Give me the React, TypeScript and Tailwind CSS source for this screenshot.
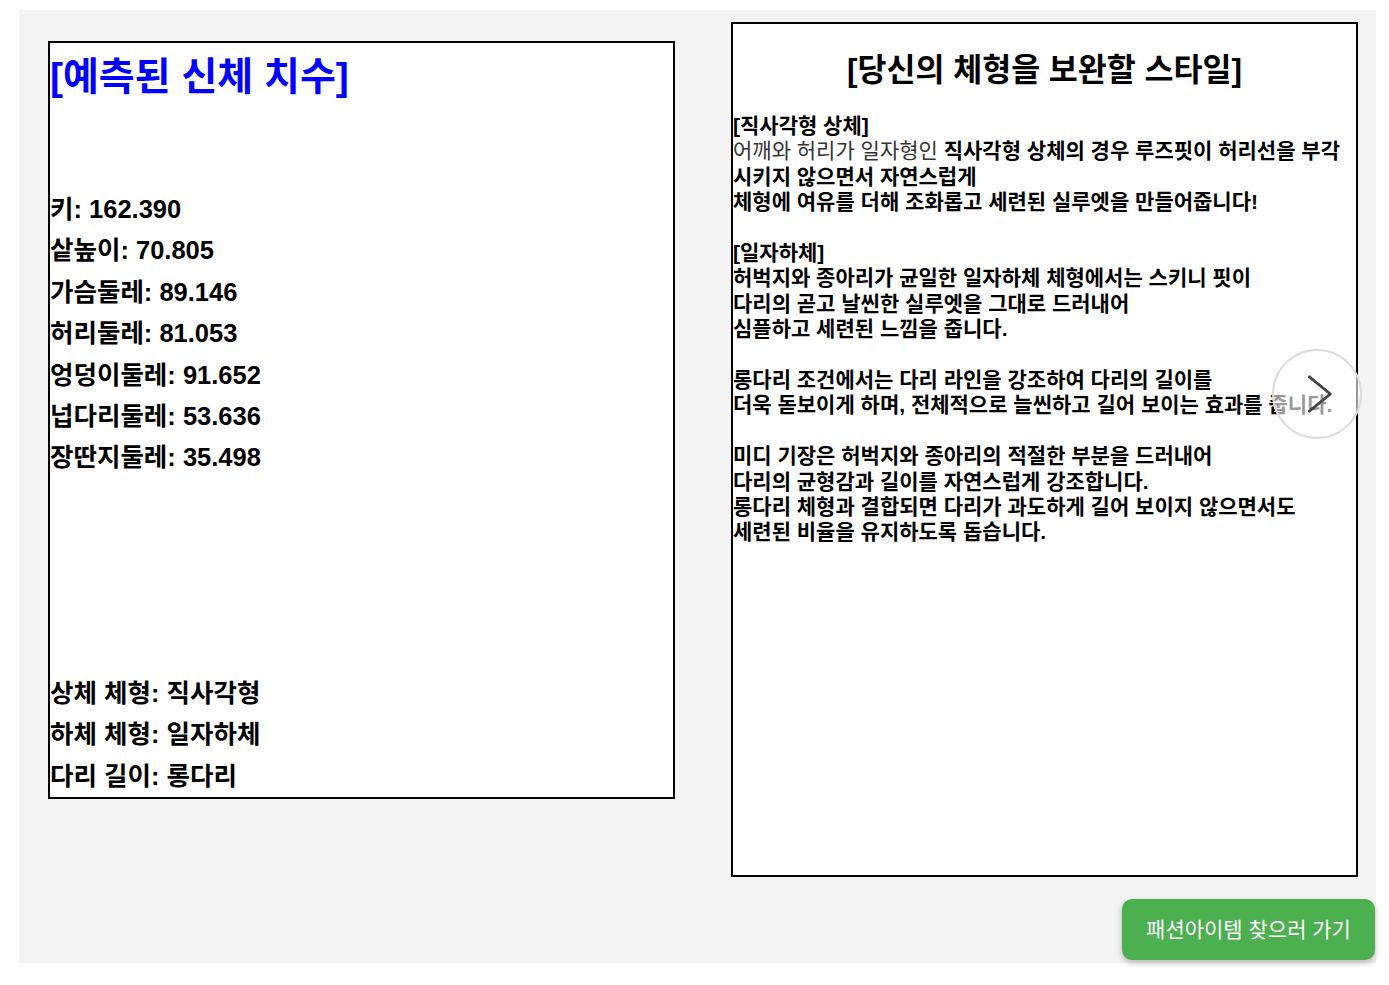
import React from "react"

const font = "font-['Liberation_Sans','Noto_Sans_CJK_KR',sans-serif]"

const sizes = [
  ["키", "162.390"],
  ["샅높이", "70.805"],
  ["가슴둘레", "89.146"],
  ["허리둘레", "81.053"],
  ["엉덩이둘레", "91.652"],
  ["넙다리둘레", "53.636"],
  ["장딴지둘레", "35.498"],
]

const types = [
  ["상체 체형", "직사각형"],
  ["하체 체형", "일자하체"],
  ["다리 길이", "롱다리"],
]

const styleLines = [
  "",
  "[일자하체]",
  "허벅지와 종아리가 균일한 일자하체 체형에서는 스키니 핏이",
  "다리의 곧고 날씬한 실루엣을 그대로 드러내어",
  "심플하고 세련된 느낌을 줍니다.",
  "",
  "롱다리 조건에서는 다리 라인을 강조하여 다리의 길이를",
  "더욱 돋보이게 하며, 전체적으로 늘씬하고 길어 보이는 효과를 줍니다.",
  "",
  "미디 기장은 허벅지와 종아리의 적절한 부분을 드러내어",
  "다리의 균형감과 길이를 자연스럽게 강조합니다.",
  "롱다리 체형과 결합되면 다리가 과도하게 길어 보이지 않으면서도",
  "세련된 비율을 유지하도록 돕습니다.",
]

function SizeCard() {
  return (
    <div className="mt-[19px] flex h-[758px] w-[627px] shrink-0 flex-col border-2 border-black bg-white">
      <h1 className="mt-[10px] text-[39px] leading-[48px] font-bold text-[#0000ff]">
        [예측된 신체 치수]
      </h1>
      <div className="mt-[88px]">
        {sizes.map(([k, v]) => (
          <p key={k} className="text-[25.5px] leading-[41.4px] font-bold text-black">
            {k}: {v}
          </p>
        ))}
      </div>
      <div className="mt-auto">
        {types.map(([k, v]) => (
          <p key={k} className="text-[25.5px] leading-[41.5px] font-bold text-black">
            {k}: {v}
          </p>
        ))}
      </div>
    </div>
  )
}

function StyleCard() {
  return (
    <div className="relative h-[855px] w-[627px] shrink-0 border-2 border-black bg-white">
      <h2 className="mt-[26px] text-center text-[31.5px] leading-[40px] font-bold text-black">
        [당신의 체형을 보완할 스타일]
      </h2>
      <div className="mt-[23px] text-[21px] leading-[25.4px] font-bold text-black">
        <p>[직사각형 상체]</p>
        <p>
          <span className="font-normal text-[#333]">어깨와 허리가 일자형인 </span>
          직사각형 상체의 경우 루즈핏이 허리선을 부각
          <br />
          시키지 않으면서 자연스럽게
        </p>
        <p>체형에 여유를 더해 조화롭고 세련된 실루엣을 만들어줍니다!</p>
        {styleLines.map((line, i) =>
          line ? <p key={i}>{line}</p> : <div key={i} className="h-[25.4px]" />
        )}
      </div>

      <button className="absolute top-[325px] right-[-6px] flex h-[90px] w-[90px] items-center justify-center rounded-full border-2 border-[#dcdcdc] bg-white/60">
        <svg width="90" height="90" viewBox="0 0 90 90" fill="none">
          <polyline
            points="37,27 59,45 37,63"
            stroke="#444"
            strokeWidth="3"
            strokeLinecap="round"
            strokeLinejoin="round"
          />
        </svg>
      </button>
    </div>
  )
}

export default function App() {
  return (
    <div className={`${font} min-h-screen bg-white pt-[10px] pl-[19px]`}>
      <div className="flex h-[953px] w-[1357px] flex-col bg-[#f3f3f3]">
        <div className="flex items-start gap-[56px] pt-[12px] pl-[29px]">
          <SizeCard />
          <StyleCard />
        </div>
        <div className="mt-[22px] flex justify-end pr-[1px]">
          <button className="h-[61px] w-[253px] rounded-[10px] bg-[#4caf50] text-[21px] text-white shadow-[0_3px_6px_rgba(0,0,0,0.25)]">
            패션아이템 찾으러 가기
          </button>
        </div>
      </div>
    </div>
  )
}
